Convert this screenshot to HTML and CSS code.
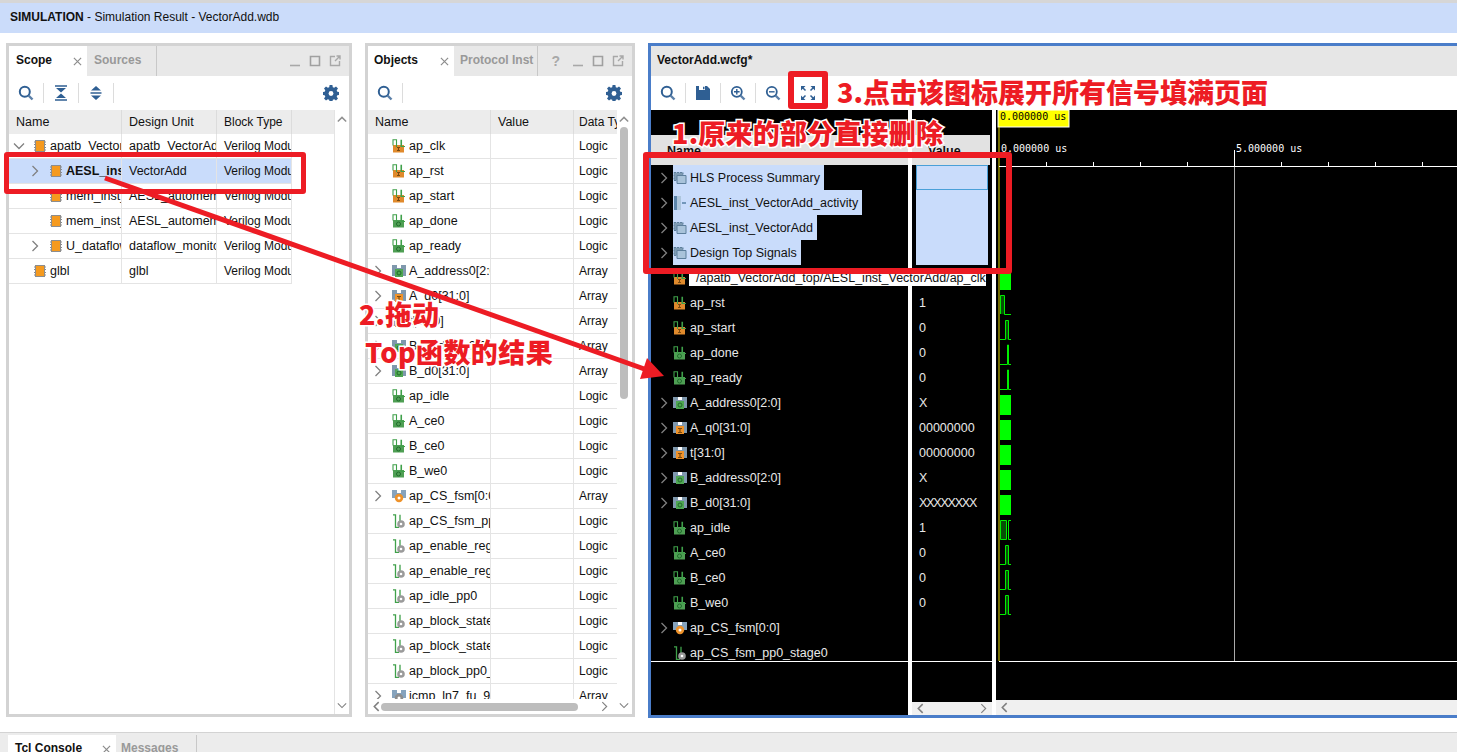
FILE: index.html
```html
<!doctype html>
<html lang="en">
<head>
	<meta charset="UTF-8">
	<title>SIMULATION - Simulation Result - VectorAdd.wdb</title>
	<link rel="stylesheet" href="styles.css">
</head>
<body>

	<!-- icon set -->
	<svg class="defs" width="0" height="0">
		<symbol id="i-search" viewBox="0 0 16 16"><circle cx="6.8" cy="6.8" r="5" fill="none" stroke="#2f5f93" stroke-width="2"/><path d="M10.5 10.5l4 4" stroke="#5b7fa8" stroke-width="2.4"/></symbol>
		<symbol id="i-collapse" viewBox="0 0 14 16"><path d="M1 1h12M1 15h12" stroke="#2f5f93" stroke-width="1.6"/><path d="M2 3h10L7 7.5zM2 13h10L7 8.500z" fill="#2f5f93"/></symbol>
		<symbol id="i-expand" viewBox="0 0 14 16"><path d="M7 1l5 4.500H2zM7 15l-5-4.500h10z" fill="#2f5f93"/><path d="M1.500 8h11" stroke="#2f5f93" stroke-width="1.500"/></symbol>
		<symbol id="i-gear" viewBox="0 0 16 16"><path d="M6.6 0h2.8l.4 2.2 1.4.6L13 1.5l2 2-1.3 1.8.6 1.4 2.2.4v2.8l-2.2.4-.6 1.4 1.3 1.8-2 2-1.8-1.3-1.4.6-.4 2.2H6.6l-.4-2.2-1.4-.6L3 15.5l-2-2 1.3-1.8-.6-1.4L-.5 9.9V7.1l2.200-.4.6-1.4L1 3.500l2-2 1.800 1.300 1.400-.6z" fill="#2f5f93"/><circle cx="8" cy="8.500" r="2.400" fill="#fff"/></symbol>
		<symbol id="i-save" viewBox="0 0 14 14"><path d="M0 0h11l3 3v11H0z" fill="#2f5f93"/><path d="M3 0h6v4H3z" fill="#fff"/><path d="M7 .8h1.500v2.500H7z" fill="#2f5f93"/></symbol>
		<symbol id="i-zoomin" viewBox="0 0 16 16"><circle cx="6.800" cy="6.800" r="5" fill="none" stroke="#2f5f93" stroke-width="1.800"/><path d="M10.500 10.500l4 4" stroke="#5b7fa8" stroke-width="2.400"/><path d="M4 6.800h5.600M6.800 4v5.600" stroke="#2f5f93" stroke-width="1.400"/></symbol>
		<symbol id="i-zoomout" viewBox="0 0 16 16"><circle cx="6.800" cy="6.800" r="5" fill="none" stroke="#2f5f93" stroke-width="1.800"/><path d="M10.500 10.500l4 4" stroke="#5b7fa8" stroke-width="2.400"/><path d="M4 6.800h5.600" stroke="#2f5f93" stroke-width="1.400"/></symbol>
		<symbol id="i-fit" viewBox="0 0 14 14"><path d="M0 0h4.500L0 4.500zM14 0v4.500L9.500 0zM0 14v-4.500L4.500 14zM14 14H9.500L14 9.500z" fill="#2f5f93"/><path d="M1.500 1.500l3 3M12.500 1.500l-3 3M1.500 12.500l3-3M12.500 12.500l-3-3" stroke="#2f5f93" stroke-width="1.500"/></symbol>
		<symbol id="i-min" viewBox="0 0 12 12"><path d="M1 10.500h10" stroke="#a8a8a8" stroke-width="1.600"/></symbol>
		<symbol id="i-max" viewBox="0 0 12 12"><path d="M1.500 1.500h9v9h-9z" fill="none" stroke="#a0a0a0" stroke-width="1.600"/></symbol>
		<symbol id="i-pop" viewBox="0 0 12 12"><path d="M6 1.500H1.500v9h9V6M6 6l4.500-4.500M7.500 1h3.500v3.500" fill="none" stroke="#a8a8a8" stroke-width="1.400"/></symbol>
		<symbol id="i-x" viewBox="0 0 10 10"><path d="M1 1l8 8M9 1l-8 8" stroke="#8c8c8c" stroke-width="1.300"/></symbol>
		<symbol id="i-right" viewBox="0 0 8 12"><path d="M1.500 1l5 5-5 5" fill="none" stroke="#808080" stroke-width="1.300"/></symbol>
		<symbol id="i-down" viewBox="0 0 12 8"><path d="M1 1.500l5 5 5-5" fill="none" stroke="#808080" stroke-width="1.300"/></symbol>
		<symbol id="i-up" viewBox="0 0 12 8"><path d="M1 6.500l5-5 5 5" fill="none" stroke="#909090" stroke-width="1.800"/></symbol>
		<symbol id="i-left" viewBox="0 0 8 12"><path d="M6.500 1l-5 5 5 5" fill="none" stroke="#808080" stroke-width="1.800"/></symbol>
		<symbol id="i-chip" viewBox="0 0 14 14"><path d="M1 3h12M1 5.500h12M1 8.500h12M1 11h12" stroke="#8a8a8a" stroke-width="1"/><rect x="2.500" y="1.500" width="9" height="11" fill="#f59a1f" stroke="#8d8d8d"/></symbol>
		<symbol id="i-sig-o" viewBox="0 0 14 14"><rect x="1" y="6" width="11" height="7.500" fill="#e08a2c"/><path d="M5 8h3v1H7v2h1v1H5v-1h1V9H5z" fill="#7a4a10"/><path d="M1 6.500V.8h3.500V8M9 8V.8M9.500.8V8M9.500 7.500H13" fill="none" stroke="#3fa04a" stroke-width="1.100"/></symbol>
		<symbol id="i-sig-g" viewBox="0 0 14 14"><rect x="1" y="6" width="11" height="7.500" fill="#4f9f54"/><circle cx="6.500" cy="10" r="2" fill="none" stroke="#1f6b2a"/><path d="M1 6.500V.8h3.500V8M9 8V.8M9.500.8V8M9.500 7.500H13" fill="none" stroke="#3fa04a" stroke-width="1.100"/></symbol>
		<symbol id="i-sig-s" viewBox="0 0 14 14"><path d="M1 .8h2.500V13.500H7M8 .8V7" fill="none" stroke="#3fa04a" stroke-width="1.300"/><circle cx="9" cy="10" r="3.800" fill="#9a9a9a"/><circle cx="9" cy="10" r="1.300" fill="#fff"/></symbol>
		<symbol id="i-bus-g" viewBox="0 0 14 14"><path d="M0 1h14v11H0z" fill="#7f98ad"/><path d="M5 1h4v3H5z" fill="#fff"/><rect x="3" y="5" width="8" height="8" fill="#4fa652"/><circle cx="7" cy="9" r="2" fill="none" stroke="#1f6b2a"/></symbol>
		<symbol id="i-bus-o" viewBox="0 0 14 14"><path d="M0 1h14v11H0z" fill="#7f98ad"/><path d="M5 1h4v3H5z" fill="#fff"/><rect x="3" y="5" width="8" height="8" fill="#ee922a"/><path d="M5 7h4v1H7.600v3H9v1H5v-1h1.400V8H5z" fill="#7a4a10"/></symbol>
		<symbol id="i-bus-f" viewBox="0 0 14 14"><path d="M0 1h14v8H0z" fill="#86a3bd"/><path d="M5 1h4v3H5z" fill="#fff"/><circle cx="7" cy="9" r="4.200" fill="#ee922a"/><circle cx="7" cy="9" r="1.500" fill="#fff"/></symbol>
		<symbol id="i-bus-s" viewBox="0 0 14 14"><path d="M0 1h14v8H0z" fill="#86a3bd"/><path d="M5 1h4v3H5z" fill="#fff"/><circle cx="7" cy="9" r="4.200" fill="#8e8e8e"/><circle cx="7" cy="9" r="1.500" fill="#fff"/></symbol>
		<symbol id="i-group" viewBox="0 0 14 14"><path d="M1 1.500h9v8H1z" fill="#7e9bb3" stroke="#5d7f9c" stroke-dasharray="2 1"/><path d="M4 4.500h9v8H4z" fill="#a9c3da" stroke="#5d7f9c"/></symbol>
		<symbol id="i-activity" viewBox="0 0 14 14"><path d="M1 0h3v14H1z" fill="#5d86ab"/><path d="M4 0h4v14H4z" fill="#aec6dc"/><path d="M9 7h4" stroke="#5d86ab" stroke-width="1.600"/></symbol>
	</svg>

	<div class="titlebar"><b>SIMULATION</b> - Simulation Result - VectorAdd.wdb</div>

	<div class="main">

		<!-- Scope -->
		<div class="panel scope">
			<div class="tabs">
				<div class="tab active">Scope<svg class="tab-x"><use href="#i-x"/></svg></div>
				<div class="tab">Sources</div>
				<div class="win-btns">
					<svg><use href="#i-min"/></svg><svg><use href="#i-max"/></svg><svg><use href="#i-pop"/></svg>
				</div>
			</div>
			<div class="toolbar">
				<svg class="tool"><use href="#i-search"/></svg>
				<i class="sep"></i>
				<svg class="tool"><use href="#i-collapse"/></svg>
				<i class="sep"></i>
				<svg class="tool"><use href="#i-expand"/></svg>
				<i class="sep"></i>
				<svg class="tool gear"><use href="#i-gear"/></svg>
			</div>
			<div class="table-wrap">
				<div class="table">
					<div class="row head"><span class="c-name">Name</span><span class="c-unit">Design Unit</span><span class="c-block">Block Type</span></div>
					<div class="row"><span class="c-name"><svg class="arrow-d"><use href="#i-down"/></svg><svg class="icon"><use href="#i-chip"/></svg>apatb_VectorAdd_top</span><span class="c-unit">apatb_VectorAdd_top</span><span class="c-block">Verilog Module</span></div>
					<div class="row selected"><span class="c-name lvl1"><svg class="arrow-r"><use href="#i-right"/></svg><svg class="icon"><use href="#i-chip"/></svg><b>AESL_inst_VectorAdd</b></span><span class="c-unit">VectorAdd</span><span class="c-block">Verilog Module</span></div>
					<div class="row"><span class="c-name lvl1"><i class="no-arrow"></i><svg class="icon"><use href="#i-chip"/></svg>mem_inst_A</span><span class="c-unit">AESL_automem_A</span><span class="c-block">Verilog Module</span></div>
					<div class="row"><span class="c-name lvl1"><i class="no-arrow"></i><svg class="icon"><use href="#i-chip"/></svg>mem_inst_B</span><span class="c-unit">AESL_automem_B</span><span class="c-block">Verilog Module</span></div>
					<div class="row"><span class="c-name lvl1"><svg class="arrow-r"><use href="#i-right"/></svg><svg class="icon"><use href="#i-chip"/></svg>U_dataflow_monitor</span><span class="c-unit">dataflow_monitor</span><span class="c-block">Verilog Module</span></div>
					<div class="row"><span class="c-name"><i class="no-arrow"></i><svg class="icon"><use href="#i-chip"/></svg>glbl</span><span class="c-unit">glbl</span><span class="c-block">Verilog Module</span></div>
				</div>
				<div class="vscroll">
					<svg class="sb-up"><use href="#i-up"/></svg>
					<svg class="sb-down"><use href="#i-down"/></svg>
				</div>
			</div>
		</div>

		<!-- Objects -->
		<div class="panel objects">
			<div class="tabs">
				<div class="tab active">Objects<svg class="tab-x"><use href="#i-x"/></svg></div>
				<div class="tab">Protocol Inst</div>
				<div class="win-btns">
					<span class="help">?</span><svg><use href="#i-min"/></svg><svg><use href="#i-max"/></svg><svg><use href="#i-pop"/></svg>
				</div>
			</div>
			<div class="toolbar">
				<svg class="tool"><use href="#i-search"/></svg>
				<i class="sep"></i>
				<svg class="tool gear"><use href="#i-gear"/></svg>
			</div>
			<div class="table-wrap">
				<div class="obj-left">
					<div class="table obj-table">
						<div class="row head"><span class="c-oname">Name</span><span class="c-val">Value</span><span class="c-type">Data Type</span></div>
						<div class="row"><span class="c-oname"><i class="no-arrow"></i><svg class="icon"><use href="#i-sig-o"/></svg>ap_clk</span><span class="c-val"></span><span class="c-type">Logic</span></div>
						<div class="row"><span class="c-oname"><i class="no-arrow"></i><svg class="icon"><use href="#i-sig-o"/></svg>ap_rst</span><span class="c-val"></span><span class="c-type">Logic</span></div>
						<div class="row"><span class="c-oname"><i class="no-arrow"></i><svg class="icon"><use href="#i-sig-o"/></svg>ap_start</span><span class="c-val"></span><span class="c-type">Logic</span></div>
						<div class="row"><span class="c-oname"><i class="no-arrow"></i><svg class="icon"><use href="#i-sig-g"/></svg>ap_done</span><span class="c-val"></span><span class="c-type">Logic</span></div>
						<div class="row"><span class="c-oname"><i class="no-arrow"></i><svg class="icon"><use href="#i-sig-g"/></svg>ap_ready</span><span class="c-val"></span><span class="c-type">Logic</span></div>
						<div class="row"><span class="c-oname"><svg class="arrow-r"><use href="#i-right"/></svg><svg class="icon"><use href="#i-bus-g"/></svg>A_address0[2:0]</span><span class="c-val"></span><span class="c-type">Array</span></div>
						<div class="row"><span class="c-oname"><svg class="arrow-r"><use href="#i-right"/></svg><svg class="icon"><use href="#i-bus-o"/></svg>A_q0[31:0]</span><span class="c-val"></span><span class="c-type">Array</span></div>
						<div class="row"><span class="c-oname"><svg class="arrow-r"><use href="#i-right"/></svg><svg class="icon"><use href="#i-bus-o"/></svg>t[31:0]</span><span class="c-val"></span><span class="c-type">Array</span></div>
						<div class="row"><span class="c-oname"><svg class="arrow-r"><use href="#i-right"/></svg><svg class="icon"><use href="#i-bus-g"/></svg>B_address0[2:0]</span><span class="c-val"></span><span class="c-type">Array</span></div>
						<div class="row"><span class="c-oname"><svg class="arrow-r"><use href="#i-right"/></svg><svg class="icon"><use href="#i-bus-g"/></svg>B_d0[31:0]</span><span class="c-val"></span><span class="c-type">Array</span></div>
						<div class="row"><span class="c-oname"><i class="no-arrow"></i><svg class="icon"><use href="#i-sig-g"/></svg>ap_idle</span><span class="c-val"></span><span class="c-type">Logic</span></div>
						<div class="row"><span class="c-oname"><i class="no-arrow"></i><svg class="icon"><use href="#i-sig-g"/></svg>A_ce0</span><span class="c-val"></span><span class="c-type">Logic</span></div>
						<div class="row"><span class="c-oname"><i class="no-arrow"></i><svg class="icon"><use href="#i-sig-g"/></svg>B_ce0</span><span class="c-val"></span><span class="c-type">Logic</span></div>
						<div class="row"><span class="c-oname"><i class="no-arrow"></i><svg class="icon"><use href="#i-sig-g"/></svg>B_we0</span><span class="c-val"></span><span class="c-type">Logic</span></div>
						<div class="row"><span class="c-oname"><svg class="arrow-r"><use href="#i-right"/></svg><svg class="icon"><use href="#i-bus-f"/></svg>ap_CS_fsm[0:0]</span><span class="c-val"></span><span class="c-type">Array</span></div>
						<div class="row"><span class="c-oname"><i class="no-arrow"></i><svg class="icon"><use href="#i-sig-s"/></svg>ap_CS_fsm_pp0_stage0</span><span class="c-val"></span><span class="c-type">Logic</span></div>
						<div class="row"><span class="c-oname"><i class="no-arrow"></i><svg class="icon"><use href="#i-sig-s"/></svg>ap_enable_reg_pp0_iter0</span><span class="c-val"></span><span class="c-type">Logic</span></div>
						<div class="row"><span class="c-oname"><i class="no-arrow"></i><svg class="icon"><use href="#i-sig-s"/></svg>ap_enable_reg_pp0_iter1</span><span class="c-val"></span><span class="c-type">Logic</span></div>
						<div class="row"><span class="c-oname"><i class="no-arrow"></i><svg class="icon"><use href="#i-sig-s"/></svg>ap_idle_pp0</span><span class="c-val"></span><span class="c-type">Logic</span></div>
						<div class="row"><span class="c-oname"><i class="no-arrow"></i><svg class="icon"><use href="#i-sig-s"/></svg>ap_block_state1</span><span class="c-val"></span><span class="c-type">Logic</span></div>
						<div class="row"><span class="c-oname"><i class="no-arrow"></i><svg class="icon"><use href="#i-sig-s"/></svg>ap_block_state2</span><span class="c-val"></span><span class="c-type">Logic</span></div>
						<div class="row"><span class="c-oname"><i class="no-arrow"></i><svg class="icon"><use href="#i-sig-s"/></svg>ap_block_pp0_stage0</span><span class="c-val"></span><span class="c-type">Logic</span></div>
						<div class="row"><span class="c-oname"><svg class="arrow-r"><use href="#i-right"/></svg><svg class="icon"><use href="#i-bus-s"/></svg>icmp_ln7_fu_96_p2</span><span class="c-val"></span><span class="c-type">Array</span></div>
					</div>
					<div class="hscroll">
						<svg class="sb-left"><use href="#i-left"/></svg>
						<div class="hthumb"></div>
						<svg class="sb-right"><use href="#i-right"/></svg>
					</div>
				</div>
				<div class="vscroll obj-vscroll">
					<svg class="sb-up"><use href="#i-up"/></svg>
					<div class="vthumb"></div>
					<svg class="sb-down"><use href="#i-down"/></svg>
				</div>
			</div>
		</div>

		<!-- Waveform -->
		<div class="panel wave">
			<div class="tabs wave-title"><b>VectorAdd.wcfg*</b></div>
			<div class="toolbar wave-tools">
				<svg class="tool"><use href="#i-search"/></svg>
				<i class="sep"></i>
				<svg class="tool small"><use href="#i-save"/></svg>
				<i class="sep"></i>
				<svg class="tool"><use href="#i-zoomin"/></svg>
				<i class="sep"></i>
				<svg class="tool"><use href="#i-zoomout"/></svg>
				<i class="sep"></i>
				<svg class="tool small"><use href="#i-fit"/></svg>
			</div>
			<div class="wave-body">
				<div class="wave-names">
					<div class="wave-head">Name</div>
					<div class="wave-rows">
						<div class="w-row"><svg class="arrow-r w"><use href="#i-right"/></svg><span class="hl"><svg class="icon"><use href="#i-group"/></svg>HLS Process Summary</span></div>
						<div class="w-row"><svg class="arrow-r w"><use href="#i-right"/></svg><span class="hl"><svg class="icon"><use href="#i-activity"/></svg>AESL_inst_VectorAdd_activity</span></div>
						<div class="w-row"><svg class="arrow-r w"><use href="#i-right"/></svg><span class="hl"><svg class="icon"><use href="#i-group"/></svg>AESL_inst_VectorAdd</span></div>
						<div class="w-row"><svg class="arrow-r w"><use href="#i-right"/></svg><span class="hl"><svg class="icon"><use href="#i-group"/></svg>Design Top Signals</span></div>
						<div class="w-row"><i class="no-arrow w"></i><svg class="icon"><use href="#i-sig-o"/></svg>ap_clk</div>
						<div class="w-row"><i class="no-arrow w"></i><svg class="icon"><use href="#i-sig-o"/></svg>ap_rst</div>
						<div class="w-row"><i class="no-arrow w"></i><svg class="icon"><use href="#i-sig-o"/></svg>ap_start</div>
						<div class="w-row"><i class="no-arrow w"></i><svg class="icon"><use href="#i-sig-g"/></svg>ap_done</div>
						<div class="w-row"><i class="no-arrow w"></i><svg class="icon"><use href="#i-sig-g"/></svg>ap_ready</div>
						<div class="w-row"><svg class="arrow-r w"><use href="#i-right"/></svg><svg class="icon"><use href="#i-bus-g"/></svg>A_address0[2:0]</div>
						<div class="w-row"><svg class="arrow-r w"><use href="#i-right"/></svg><svg class="icon"><use href="#i-bus-o"/></svg>A_q0[31:0]</div>
						<div class="w-row"><svg class="arrow-r w"><use href="#i-right"/></svg><svg class="icon"><use href="#i-bus-o"/></svg>t[31:0]</div>
						<div class="w-row"><svg class="arrow-r w"><use href="#i-right"/></svg><svg class="icon"><use href="#i-bus-g"/></svg>B_address0[2:0]</div>
						<div class="w-row"><svg class="arrow-r w"><use href="#i-right"/></svg><svg class="icon"><use href="#i-bus-g"/></svg>B_d0[31:0]</div>
						<div class="w-row"><i class="no-arrow w"></i><svg class="icon"><use href="#i-sig-g"/></svg>ap_idle</div>
						<div class="w-row"><i class="no-arrow w"></i><svg class="icon"><use href="#i-sig-g"/></svg>A_ce0</div>
						<div class="w-row"><i class="no-arrow w"></i><svg class="icon"><use href="#i-sig-g"/></svg>B_ce0</div>
						<div class="w-row"><i class="no-arrow w"></i><svg class="icon"><use href="#i-sig-g"/></svg>B_we0</div>
						<div class="w-row"><svg class="arrow-r w"><use href="#i-right"/></svg><svg class="icon"><use href="#i-bus-f"/></svg>ap_CS_fsm[0:0]</div>
						<div class="w-row"><i class="no-arrow w"></i><svg class="icon"><use href="#i-sig-s"/></svg>ap_CS_fsm_pp0_stage0</div>
					</div>
				</div>
				<div class="wave-values">
					<div class="wave-head">Value</div>
					<div class="wave-rows">
						<div class="v-cell sel first"></div>
						<div class="v-cell sel"></div>
						<div class="v-cell sel"></div>
						<div class="v-cell sel"></div>
						<div class="v-cell"></div>
						<div class="v-cell">1</div>
						<div class="v-cell">0</div>
						<div class="v-cell">0</div>
						<div class="v-cell">0</div>
						<div class="v-cell">X</div>
						<div class="v-cell">00000000</div>
						<div class="v-cell">00000000</div>
						<div class="v-cell">X</div>
						<div class="v-cell tight">XXXXXXXX</div>
						<div class="v-cell">1</div>
						<div class="v-cell">0</div>
						<div class="v-cell">0</div>
						<div class="v-cell">0</div>
						<div class="v-cell"></div>
						<div class="v-cell"></div>
					</div>
					<div class="wave-hbar">
						<svg class="sb-left"><use href="#i-left"/></svg>
						<svg class="sb-right"><use href="#i-right"/></svg>
					</div>
				</div>
				<div class="wave-plot">
					<svg class="plot" viewBox="996 110 461 590" width="461" height="590">
						<!-- ruler -->
						<rect x="998" y="110" width="71" height="17" fill="#ff0" stroke="#fff"/>
						<text x="1000" y="120" class="ts dark">0.000000 us</text>
						<path d="M999 127V661" stroke="#e6d800" fill="none"/>
						<text x="1001" y="152" class="ts">0.000000 us</text>
						<text x="1236" y="152" class="ts">5.000000 us</text>
						<path d="M999 166.500H1457M999 661.500H1457" stroke="#fff"/>
						<path d="M1046.500 162v4M1093.500 162v4M1140.500 162v4M1187.500 162v4M1281.500 162v4M1328.500 162v4M1375.500 162v4M1422.500 162v4" stroke="#fff"/>
						<path d="M1234.500 150v16" stroke="#fff"/>
						<path d="M1234.500 167V661" stroke="#aaa"/>
						<!-- buses -->
						<rect x="1000" y="270" width="11" height="20" fill="#0f0"/>
						<rect x="1000" y="395" width="11" height="20" fill="#0f0"/>
						<rect x="1000" y="420" width="11" height="20" fill="#0f0"/>
						<rect x="1000" y="445" width="11" height="20" fill="#0f0"/>
						<rect x="1000" y="470" width="11" height="20" fill="#0f0"/>
						<rect x="1000" y="495" width="11" height="20" fill="#0f0"/>
						<!-- logic -->
						<path d="M1000.500 314V295.500H1004.500V314.500H1011" fill="#064f06" stroke="#0e0"/>
						<path d="M1000 339.500H1005.500V320.500H1008.500V339.500H1011" fill="#064f06" stroke="#0e0"/>
						<path d="M1000 364.500H1007.500V345H1008.500V364.500H1011" fill="none" stroke="#0e0"/>
						<path d="M1000 389.500H1007.500V370H1008.500V389.500H1011" fill="none" stroke="#0e0"/>
						<path d="M1000.500 539.500V520.500H1006.500V539.500Z" fill="#064f06" stroke="#0e0"/>
						<path d="M1011 520.500H1008.500V539.500H1011" fill="none" stroke="#0e0"/>
						<path d="M1000 564.500H1005.500V545.500H1008.500V564.500H1011" fill="#064f06" stroke="#0e0"/>
						<path d="M1000 589.500H1005.500V570.500H1008.500V589.500H1011" fill="#064f06" stroke="#0e0"/>
						<path d="M1000 614.500H1005.500V595.500H1008.500V614.500H1011" fill="#064f06" stroke="#0e0"/>
					</svg>
					<div class="wave-hbar plot-bar">
						<svg class="sb-left"><use href="#i-left"/></svg>
					</div>
				</div>
			</div>
		</div>
	</div>

	<div class="bottom-tabs">
		<div class="tab active">Tcl Console<svg class="tab-x"><use href="#i-x"/></svg></div>
		<div class="tab">Messages</div>
	</div>

	<!-- things lying over the page -->
	<div class="tooltip">/apatb_VectorAdd_top/AESL_inst_VectorAdd/ap_clk</div>

	<div class="mark mark-row"></div>
	<div class="mark mark-names"></div>
	<div class="mark mark-fit"></div>

	<svg class="drag-arrow" width="1457" height="752">
		<path d="M105 178L650 371" stroke="#ed1c24" stroke-width="5"/>
		<path d="M664 376L640 379L647 358Z" fill="#ed1c24"/>
	</svg>

	<div class="note note1">1.原来的部分直接删除</div>
	<div class="note note2">2.拖动</div>
	<div class="note note2b">Top函数的结果</div>
	<div class="note note3">3.点击该图标展开所有信号填满页面</div>

</body>
</html>
```

FILE: styles.css
```css
html,body {
	margin: 0;
	padding: 0;
}

body {
	width: 1457px;
	height: 752px;
	overflow: hidden;
	position: relative;
	background: #fff;
	color: #111;
	font: 12.5px "Liberation Sans", Arial, sans-serif;
	border-top: 3px solid #d6d6d6;
	box-sizing: border-box;
}

.defs {
	position: absolute;
}

.titlebar {
	height: 30px;
	line-height: 29px;
	padding-left: 10px;
	background: #cbdcfa;
	font-size: 12px;
}

.main {
	display: flex;
	align-items: flex-start;
	height: 674px;
	margin-top: 10px;
	padding-left: 6px;
	gap: 13px;
}

/* panels */
.panel {
	display: flex;
	flex-direction: column;
	height: 674px;
	border: 3px solid #d3d3d3;
	box-sizing: border-box;
	flex: none;
}

.scope {
	width: 346px;
}

.objects {
	width: 270px;
}

.wave {
	width: 812px;
	height: 675px;
	border-color: #4a7dc9;
	border-right: none;
}

.tabs {
	display: flex;
	height: 30px;
	background: #e8e8e8;
	flex: none;
}

.tab {
	display: flex;
	align-items: center;
	padding: 0 7px 2px;
	font-weight: bold;
	font-size: 12px;
	color: #999;
	white-space: nowrap;
	border-right: 1px solid #c8c8c8;
	position: relative;
}

.tab.active {
	background: #fff;
	color: #111;
	border-right: none;
}

.scope .tab.active {
	width: 64px;
}

.scope .tab:nth-child(2) {
	width: 55px;
}

.objects .tab {
	padding-left: 6px;
}

.objects .tab.active {
	width: 80px;
	padding-right: 0;
}

.objects .tab:nth-child(2) {
	width: 76px;
	padding-right: 1px;
}

.tab-x {
	position: absolute;
	right: 5px;
	top: 11px;
	width: 9px;
	height: 9px;
}

.win-btns {
	margin-left: auto;
	display: flex;
	align-items: center;
	gap: 8px;
	padding-right: 8px;
}

.win-btns svg {
	width: 12px;
	height: 12px;
}

.help {
	font-weight: bold;
	font-size: 14px;
	color: #a8a8a8;
	margin-right: 4px;
}

.wave-title {
	align-items: center;
	padding: 0 0 2px 6px;
	box-sizing: border-box;
	background: #e6e6e6;
	font-size: 12px;
}

.toolbar {
	display: flex;
	align-items: center;
	height: 33px;
	padding-left: 9px;
	flex: none;
	background: #fff;
}

.tool {
	width: 16px;
	height: 16px;
	flex: none;
}

.tool.small {
	width: 14px;
	height: 14px;
	margin: 0 1px;
}

.gear {
	margin-left: auto;
	margin-right: 10px;
}

.sep {
	width: 1px;
	height: 20px;
	background: #dcdcdc;
	margin: 0 9px;
	flex: none;
}

/* tables */
.table-wrap {
	display: flex;
	flex: 1;
	min-height: 0;
	margin-top: 1px;
	overflow: hidden;
}

.table {
	flex: 1;
	min-width: 0;
	overflow: hidden;
}

.row {
	display: flex;
	height: 25px;
	line-height: 24px;
	width: 283px;
	box-sizing: border-box;
	border-bottom: 1px solid #e4e4e4;
}

.row.head {
	width: auto;
	height: 24px;
	background: #ececec;
	border-bottom: none;
}

.row.head span {
	padding-left: 7px;
	border-right: 1px solid #dcdcdc;
}

.row.selected {
	background: #c9dcfb;
}

.row span {
	display: flex;
	align-items: center;
	box-sizing: border-box;
	overflow: hidden;
	white-space: nowrap;
	flex: none;
	border-right: 1px solid #e4e4e4;
}

.c-name {
	width: 113px;
}

.c-unit {
	width: 95px;
	padding-left: 7px;
}

.c-block {
	width: 75px;
	padding-left: 7px;
	font-size: 12px;
}

.lvl1 {
	padding-left: 16px;
}

.arrow-d {
	width: 12px;
	height: 8px;
	margin: 0 8px 0 4px;
	flex: none;
}

.arrow-r,
.no-arrow {
	display: block;
	width: 8px;
	height: 12px;
	margin: 0 10px 0 6px;
	flex: none;
}

.icon {
	width: 14px;
	height: 14px;
	margin-right: 3px;
	flex: none;
}

.vscroll {
	width: 15px;
	flex: none;
	position: relative;
	border-left: 1px solid #e4e4e4;
	box-sizing: border-box;
}

.sb-up {
	position: absolute;
	top: 6px;
	left: 2px;
	width: 10px;
	height: 7px;
}

.sb-down {
	position: absolute;
	bottom: 5px;
	left: 2px;
	width: 10px;
	height: 7px;
}

/* objects */
.obj-left {
	flex: 1;
	display: flex;
	flex-direction: column;
	min-width: 0;
}

.obj-table .row {
	width: auto;
}

.c-oname {
	width: 123px;
}

.c-val {
	width: 83px;
	padding-left: 7px;
}

.c-type {
	width: 44px;
	padding-left: 5px;
	font-size: 12px;
	border-right: none !important;
}

.row.head .c-type {
	padding-left: 5px;
}

.hscroll {
	height: 15px;
	flex: none;
	display: flex;
	align-items: center;
	padding: 0 9px 0 5px;
	gap: 1px;
	background: #fff;
}

.sb-left,
.sb-right {
	width: 7px;
	height: 11px;
	flex: none;
}

.hthumb {
	width: 197px;
	height: 8px;
	border-radius: 4px;
	background: #bdbdbd;
	margin-right: auto;
}

.obj-vscroll {
	border-left: none;
}

.vthumb {
	position: absolute;
	left: 3px;
	top: 17px;
	width: 8px;
	height: 272px;
	border-radius: 4px;
	background: #bdbdbd;
}

/* waveform */
.wave-body {
	display: flex;
	flex: 1;
	min-height: 0;
	margin-top: 1px;
	background: #fff;
}

.wave-names,
.wave-values,
.wave-plot {
	display: flex;
	flex-direction: column;
	background: #000;
	flex: none;
	color: #e8e8e8;
}

.wave-names {
	width: 257px;
	margin-right: 4px;
	padding-top: 25px;
}

.wave-values {
	width: 80px;
	margin-right: 4px;
	padding-top: 25px;
}

.wave-plot {
	width: 461px;
}

.wave-head {
	height: 30px;
	line-height: 32px;
	background: #e2e2e2;
	color: #111;
	font-weight: bold;
	padding-left: 16px;
	flex: none;
}

.wave-values .wave-head {
	margin-right: 2px;
}

.wave-rows {
	height: 496px;
	flex: none;
	overflow: hidden;
	border-bottom: 1px solid #fff;
}

.w-row {
	display: flex;
	align-items: center;
	height: 25px;
	padding-left: 9px;
	white-space: nowrap;
}

.arrow-r.w,
.no-arrow.w {
	margin: 0 5px 0 0;
}

.hl {
	display: flex;
	align-items: center;
	height: 25px;
	padding-right: 4px;
	background: #c9dcfb;
	color: #111;
}

.v-cell {
	height: 25px;
	line-height: 27px;
	padding-left: 7px;
}

.v-cell.tight {
	letter-spacing: -1.2px;
}

.v-cell.sel {
	margin: 0 4px;
	background: #c9dcfb;
}

.v-cell.first {
	box-sizing: border-box;
	border: 1px solid #4aa0d8;
}

.wave-hbar {
	margin-top: auto;
	height: 13px;
	display: flex;
	align-items: center;
	justify-content: space-between;
	padding: 0 5px;
	background: #f0f0f0;
}

.plot-bar {
	height: 15px;
	margin-top: 0;
}

.plot {
	display: block;
}

.ts {
	font: 10px "DejaVu Sans Mono", "Liberation Mono", monospace;
	fill: #fff;
}

.ts.dark {
	fill: #000;
}

.bottom-tabs {
	display: flex;
	height: 30px;
	margin-top: 15px;
	padding-left: 8px;
	background: #ececec;
	border-top: 1px solid #d3d3d3;
	box-sizing: border-box;
}

.bottom-tabs .tab {
	align-items: flex-start;
	padding-top: 6px;
	height: 24px;
	margin-top: 2px;
}

.bottom-tabs .tab.active {
	width: 94px;
}

.bottom-tabs .tab:nth-child(2) {
	width: 65px;
	padding-left: 5px;
	padding-right: 10px;
}

.bottom-tabs .tab-x {
	top: 10px;
}

/* overlay */
.tooltip {
	position: absolute;
	left: 689px;
	top: 267px;
	width: 290px;
	height: 16px;
	line-height: 16px;
	padding-left: 7px;
	background: #fff;
	white-space: nowrap;
}

.mark {
	position: absolute;
	box-sizing: border-box;
	border: 5px solid #ed1c24;
	border-radius: 3px;
}

.mark-row {
	left: 4px;
	top: 149px;
	width: 302px;
	height: 42px;
}

.mark-names {
	left: 643px;
	top: 149px;
	width: 369px;
	height: 122px;
	border-width: 6px;
}

.mark-fit {
	left: 788px;
	top: 68px;
	width: 40px;
	height: 38px;
	border-width: 6px;
}

.drag-arrow {
	position: absolute;
	left: 0;
	top: -3px;
}

.note {
	position: absolute;
	color: #ed1c24;
	font: 900 27px "Noto Sans CJK SC", "Liberation Sans", sans-serif;
	line-height: 34px;
	white-space: nowrap;
	-webkit-text-stroke: 3px #fff;
	paint-order: stroke fill;
}

.note1 {
	left: 672px;
	top: 113px;
	letter-spacing: .2px;
}

.note2 {
	left: 359px;
	top: 294px;
}

.note2b {
	left: 365px;
	top: 332px;
	letter-spacing: .4px;
}

.note3 {
	left: 837px;
	top: 72px;
}
```
